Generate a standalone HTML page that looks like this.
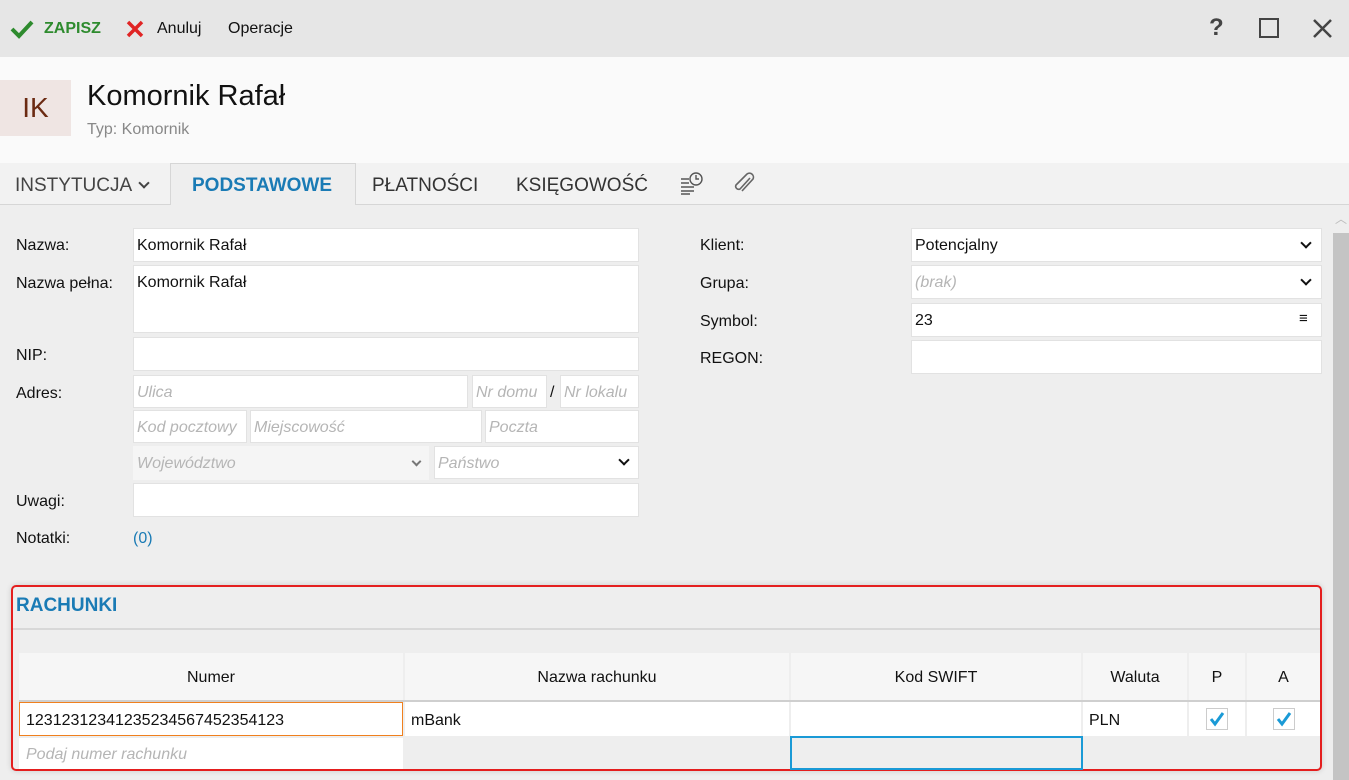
<!DOCTYPE html>
<html><head><meta charset="utf-8"><style>
*{box-sizing:border-box;margin:0;padding:0}
body{width:1349px;height:780px;overflow:hidden;background:#eeeeee;font-family:"Liberation Sans",sans-serif;font-size:16px;color:#111;position:relative}
.a{position:absolute}
.top{left:0;top:0;width:1349px;height:57px;background:#e6e6e6}
.hdr{left:0;top:57px;width:1349px;height:106px;background:#fafafa}
.tabs{left:0;top:163px;width:1349px;height:42px;background:#f2f2f2;border-bottom:1px solid #d6d6d6}
.in{position:absolute;background:#fff;border:1px solid #e2e2e2;padding:8px 3px 0;font-size:16px;white-space:nowrap;overflow:hidden}
.ph{color:#b5b5b5;font-style:italic}
.lb{position:absolute;font-size:16px}
.chev{position:absolute;width:8px;height:8px;border-right:2px solid #111;border-bottom:2px solid #111;transform:rotate(45deg)}
.th{position:absolute;top:653px;height:47px;background:#f6f6f6;text-align:center;line-height:50px;font-size:16px}
.td{position:absolute;top:702px;height:34px;background:#fff;line-height:37px;padding-left:6px;font-size:16px}
.cb{position:absolute;width:22px;height:22px;border:1px solid #ccc;background:#fff}
</style></head><body>
<div class="a top"></div>
<svg class="a" style="left:10px;top:19px" width="24" height="20" viewBox="0 0 24 20"><path d="M2 10 L9 17 L22 3" stroke="#2e8b2e" stroke-width="4" fill="none"/></svg>
<div class="a" style="left:44px;top:20px;color:#2e8b2e;font-weight:bold;font-size:16px">ZAPISZ</div>
<svg class="a" style="left:125px;top:20px" width="20" height="18" viewBox="0 0 20 18"><path d="M3 2 L17 16 M17 2 L3 16" stroke="#e02424" stroke-width="3.5"/></svg>
<div class="a" style="left:157px;top:20px">Anuluj</div>
<div class="a" style="left:228px;top:20px">Operacje</div>
<div class="a" style="left:1209px;top:14px;font-size:24px;color:#444;font-weight:bold">?</div>
<div class="a" style="left:1259px;top:18px;width:20px;height:20px;border:2px solid #444"></div>
<svg class="a" style="left:1312px;top:18px" width="21" height="21" viewBox="0 0 21 21"><path d="M2 2L19 19M19 2L2 19" stroke="#444" stroke-width="2.5"/></svg>

<div class="a hdr"></div>
<div class="a" style="left:0;top:80px;width:71px;height:56px;background:#efe5e3;color:#6b2a12;font-size:28px;text-align:center;line-height:56px">IK</div>
<div class="a" style="left:87px;top:80px;font-size:29px">Komornik Rafał</div>
<div class="a" style="left:87px;top:121px;font-size:16px;color:#888">Typ: Komornik</div>

<div class="a tabs"></div>
<div class="a" style="left:170px;top:163px;width:186px;height:42px;background:#eeeeee;border:1px solid #d6d6d6;border-bottom:none"></div>
<div class="a" style="left:15px;top:175px;font-size:19px;color:#444">INSTYTUCJA</div>
<div class="chev" style="left:140px;top:179px;border-color:#444"></div>
<div class="a" style="left:192px;top:175px;font-size:19px;color:#1a7bb5;font-weight:bold">PODSTAWOWE</div>
<div class="a" style="left:372px;top:175px;font-size:19px;color:#333">PŁATNOŚCI</div>
<div class="a" style="left:516px;top:175px;font-size:19px;color:#333">KSIĘGOWOŚĆ</div>
<svg class="a" style="left:680px;top:170px" width="26" height="26" viewBox="0 0 26 26" fill="none" stroke="#555" stroke-width="1.4"><path d="M1 9H9M1 13H9M1 17H14M1 21H14M1 24H10"/><circle cx="16" cy="9" r="6"/><path d="M16 5V9H19"/></svg>
<svg class="a" style="left:732px;top:170px" width="24" height="26" viewBox="0 0 24 26" fill="none" stroke="#666" stroke-width="1.6"><path d="M18 8 L8 19 a3 3 0 0 1 -4 -4 L15 4 a4 4 0 0 1 6 5 L10 21"/></svg>

<div class="a" style="left:1333px;top:210px;width:16px;height:20px;color:#bbb;font-size:12px;text-align:center">︿</div>
<div class="a" style="left:1333px;top:233px;width:16px;height:547px;background:#c4c4c4"></div>

<div class="lb" style="left:16px;top:237px">Nazwa:</div>
<div class="in" style="left:133px;top:228px;width:506px;height:34px">Komornik Rafał</div>
<div class="lb" style="left:16px;top:275px">Nazwa pełna:</div>
<div class="in" style="left:133px;top:265px;width:506px;height:68px">Komornik Rafał</div>
<div class="lb" style="left:16px;top:347px">NIP:</div>
<div class="in" style="left:133px;top:337px;width:506px;height:34px"></div>
<div class="lb" style="left:16px;top:385px">Adres:</div>
<div class="in ph" style="left:133px;top:375px;width:335px;height:33px">Ulica</div>
<div class="in ph" style="left:472px;top:375px;width:75px;height:33px">Nr domu</div>
<div class="a" style="left:550px;top:384px">/</div>
<div class="in ph" style="left:560px;top:375px;width:79px;height:33px">Nr lokalu</div>
<div class="in ph" style="left:133px;top:410px;width:114px;height:33px">Kod pocztowy</div>
<div class="in ph" style="left:250px;top:410px;width:232px;height:33px">Miejscowość</div>
<div class="in ph" style="left:485px;top:410px;width:154px;height:33px">Poczta</div>
<div class="in ph" style="left:133px;top:446px;width:296px;height:34px;background:#f5f5f5;border-color:#f5f5f5">Województwo</div>
<div class="chev" style="left:413px;top:458px;border-color:#777;width:7px;height:7px"></div>
<div class="in ph" style="left:434px;top:446px;width:205px;height:33px">Państwo</div>
<div class="chev" style="left:620px;top:456px"></div>
<div class="lb" style="left:16px;top:493px">Uwagi:</div>
<div class="in" style="left:133px;top:483px;width:506px;height:34px"></div>
<div class="lb" style="left:16px;top:530px">Notatki:</div>
<div class="lb" style="left:133px;top:530px;color:#1a7bb5">(0)</div>

<div class="lb" style="left:700px;top:237px">Klient:</div>
<div class="in" style="left:911px;top:228px;width:411px;height:34px">Potencjalny</div>
<div class="chev" style="left:1302px;top:239px"></div>
<div class="lb" style="left:700px;top:275px">Grupa:</div>
<div class="in ph" style="left:911px;top:265px;width:411px;height:34px">(brak)</div>
<div class="chev" style="left:1302px;top:276px"></div>
<div class="lb" style="left:700px;top:313px">Symbol:</div>
<div class="in" style="left:911px;top:303px;width:411px;height:34px">23</div>
<div class="a" style="left:1299px;top:310px;font-size:15px">≡</div>
<div class="lb" style="left:700px;top:350px">REGON:</div>
<div class="in" style="left:911px;top:340px;width:411px;height:34px"></div>

<div class="a" style="left:11px;top:585px;width:1311px;height:186px;border:2px solid #e41e1e;border-radius:5px;box-shadow:0 0 6px rgba(0,0,0,.15)"></div>
<div class="a" style="left:16px;top:595px;font-size:19px;font-weight:bold;color:#1a7bb5">RACHUNKI</div>
<div class="a" style="left:13px;top:628px;width:1307px;height:2px;background:#d8d8d8"></div>
<div class="th" style="left:19px;width:384px">Numer</div>
<div class="th" style="left:405px;width:384px">Nazwa rachunku</div>
<div class="th" style="left:791px;width:290px">Kod SWIFT</div>
<div class="th" style="left:1083px;width:104px">Waluta</div>
<div class="th" style="left:1189px;width:56px">P</div>
<div class="th" style="left:1247px;width:73px">A</div>
<div class="a" style="left:19px;top:700px;width:1301px;height:2px;background:#cfcfcf"></div>
<div class="td" style="left:19px;width:384px;border:1px solid #f0801e;line-height:35px">12312312341235234567452354123</div>
<div class="td" style="left:405px;width:384px">mBank</div>
<div class="td" style="left:791px;width:290px"></div>
<div class="td" style="left:1083px;width:104px">PLN</div>
<div class="td" style="left:1189px;width:56px"></div>
<div class="td" style="left:1247px;width:73px"></div>
<div class="cb" style="left:1206px;top:708px"><svg width="20" height="20" viewBox="0 0 20 20"><path d="M4 10 L8 15 L16 4" stroke="#1a9ad6" stroke-width="3" fill="none"/></svg></div>
<div class="cb" style="left:1273px;top:708px"><svg width="20" height="20" viewBox="0 0 20 20"><path d="M4 10 L8 15 L16 4" stroke="#1a9ad6" stroke-width="3" fill="none"/></svg></div>
<div class="a ph" style="left:19px;top:738px;width:384px;height:31px;background:#fff;padding:8px 7px 0">Podaj numer rachunku</div>
<div class="a" style="left:790px;top:736px;width:293px;height:34px;border:2px solid #1a9ad6"></div>
</body></html>
